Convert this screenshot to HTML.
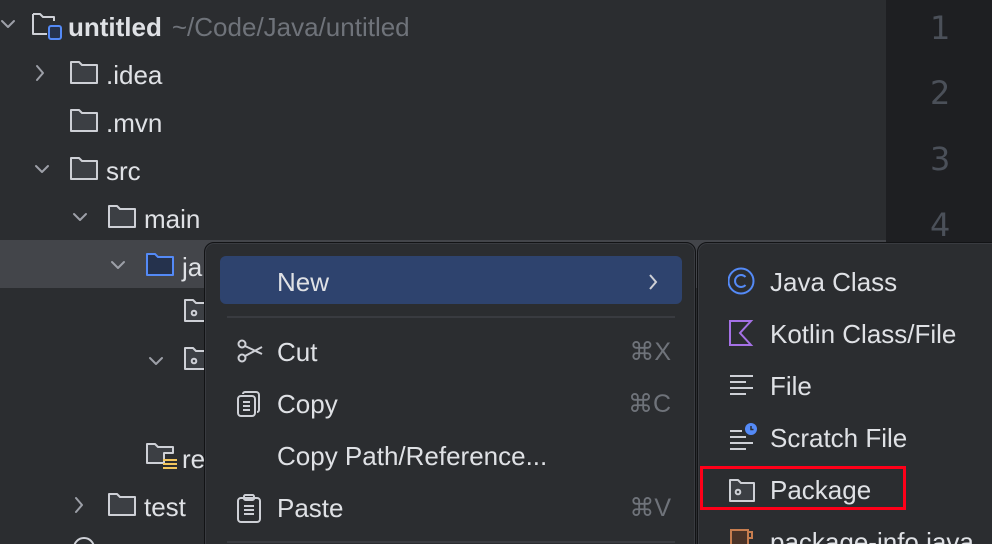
<!DOCTYPE html>
<html><head><meta charset="utf-8"><style>
html,body{margin:0;padding:0;overflow:hidden;width:992px;height:544px}
body{background:#2b2d30;position:relative;font-family:"Liberation Sans",sans-serif;color:#dfe1e5}
.ed{position:absolute;left:886px;top:0;width:106px;height:544px;background:#1e1f22}
.ln{position:absolute;left:930px;font-size:32px;color:#4b5059;font-family:"DejaVu Sans",sans-serif}
.sel{position:absolute;left:0;top:240px;width:886px;height:48px;background:#43454a}
.row{position:absolute;height:48px;display:flex;align-items:center;font-size:26px;white-space:nowrap;padding-top:3px}
.menu{position:absolute;background:#2b2d30;border:1px solid #121315;border-radius:10px;box-shadow:inset 0 0 0 1px #393b40;overflow:hidden}
.it{position:absolute;left:72px;font-size:26px;height:48px;line-height:50px;white-space:nowrap}
.sc{position:absolute;right:24px;font-size:25px;color:#6f737a;height:48px;line-height:50px}
.ic{position:absolute}
.sep{position:absolute;left:22px;right:20px;height:2px;background:#393b40}
</style></head><body>
<div class="ed"></div>
<div class="ln" style="top:9px">1</div>
<div class="ln" style="top:74px">2</div>
<div class="ln" style="top:140px">3</div>
<div class="ln" style="top:206px">4</div>
<div class="sel"></div>

<svg width="886" height="544" style="position:absolute;left:0;top:0" fill="none" stroke="#9da0a8" stroke-width="2" stroke-linecap="round" stroke-linejoin="round">
<path d="M2 21l6 6 6-6"/>
<path d="M37 66l6 7-6 7"/>
<path d="M36 166l6 6 6-6"/>
<path d="M74 214l6 6 6-6"/>
<path d="M112 262l6 6 6-6"/>
<path d="M150 358l6 6 6-6"/>
<path d="M76 498l6 7-6 7"/>
</svg>

<svg width="886" height="544" style="position:absolute;left:0;top:0" stroke-width="2" stroke-linejoin="round">
<g fill="#3c3f44" stroke="#ced0d6">
<path d="M33 14h7l3 3h11v4 M33 14v20h14" fill="none"/>
<path d="M71 62h8l3 3h15v18h-26z"/>
<path d="M71 110h8l3 3h15v18h-26z"/>
<path d="M71 158h8l3 3h15v18h-26z"/>
<path d="M109 206h8l3 3h15v18h-26z"/>
<path d="M185 300h8l3 3h10v18h-21z"/>
<path d="M185 348h8l3 3h10v18h-21z"/>
<path d="M147 444h8l3 3h15v6h-9v10h-17z"/>
<path d="M109 494h8l3 3h15v18h-26z"/>
</g>
<rect x="49" y="26" width="12" height="13" rx="2" fill="#25324d" stroke="#548af7"/>
<path d="M147 254h8l3 3h15v18h-26z" fill="#25324d" stroke="#548af7"/>
<circle cx="194" cy="313" r="2.3" fill="none" stroke="#ced0d6"/>
<circle cx="194" cy="361" r="2.3" fill="none" stroke="#ced0d6"/>
<g stroke="#f2c55c"><path d="M163 460h14M163 464h14M163 468h14"/></g>
<circle cx="84" cy="548" r="10" fill="none" stroke="#ced0d6"/>
</svg>

<div class="row" style="left:68px;top:0"><b style="font-weight:bold">untitled</b><span style="color:#6f737a;margin-left:10px">~/Code/Java/untitled</span></div>
<div class="row" style="left:106px;top:48px">.idea</div>
<div class="row" style="left:106px;top:96px">.mvn</div>
<div class="row" style="left:106px;top:144px">src</div>
<div class="row" style="left:144px;top:192px">main</div>
<div class="row" style="left:182px;top:240px">ja</div>
<div class="row" style="left:182px;top:432px">re</div>
<div class="row" style="left:144px;top:480px">test</div>

<div class="menu" style="left:204px;top:242px;width:490px;height:320px">
 <div style="position:absolute;left:15px;top:13px;width:462px;height:48px;background:#2e436e;border-radius:6px"></div>
 <div class="it" style="top:14px">New</div>
 <svg class="ic" style="left:442px;top:30px" width="12" height="18" fill="none" stroke="#ced0d6" stroke-width="2"><path d="M3 2l6 7-6 7"/></svg>
 <div class="sep" style="top:73px"></div>
 <div class="it" style="top:84px">Cut</div><div class="sc" style="top:84px">⌘X</div>
 <div class="it" style="top:136px">Copy</div><div class="sc" style="top:136px">⌘C</div>
 <div class="it" style="top:188px">Copy Path/Reference...</div>
 <div class="it" style="top:240px">Paste</div><div class="sc" style="top:240px">⌘V</div>
 <div class="sep" style="top:298px"></div>
 <svg class="ic" style="left:31px;top:96px" width="30" height="30" fill="none" stroke="#ced0d6" stroke-width="2"><circle cx="6" cy="5" r="3.5"/><circle cx="6" cy="19" r="3.5"/><path d="M9 7l17 8M9 17l17-9"/></svg>
 <svg class="ic" style="left:31px;top:147px" width="30" height="30" fill="none" stroke="#ced0d6" stroke-width="2"><rect x="2" y="6" width="17" height="20" rx="3"/><path d="M7 4a2 2 0 0 1 2-2h11a3 3 0 0 1 3 3v15a2 2 0 0 1-2 2M7 12h7M7 16h7M7 20h7"/></svg>
 <svg class="ic" style="left:31px;top:251px" width="30" height="30" fill="none" stroke="#ced0d6" stroke-width="2"><rect x="2" y="4" width="22" height="24" rx="3"/><rect x="8" y="1" width="10" height="5" rx="1.5"/><path d="M8 12h10M8 16h10M8 20h10"/></svg>
</div>

<div class="menu" style="left:697px;top:242px;width:320px;height:320px">
 <div class="it" style="top:14px">Java Class</div>
 <div class="it" style="top:66px">Kotlin Class/File</div>
 <div class="it" style="top:118px">File</div>
 <div class="it" style="top:170px">Scratch File</div>
 <div class="it" style="top:222px">Package</div>
 <div class="it" style="top:274px">package-info.java</div>
 <svg class="ic" style="left:30px;top:24px" width="30" height="30" fill="none" stroke="#548af7" stroke-width="2"><circle cx="13" cy="14" r="12.5"/><path d="M17.5 10a6 6 0 1 0 0 8"/></svg>
 <svg class="ic" style="left:30px;top:76px" width="30" height="30" fill="none" stroke="#a571e6" stroke-width="2"><path d="M2 2h21l-11 12 11 12H2z"/></svg>
 <svg class="ic" style="left:30px;top:130px" width="30" height="30" fill="none" stroke="#ced0d6" stroke-width="2"><path d="M2 3h23M2 9h16M2 15h23M2 21h16"/></svg>
 <svg class="ic" style="left:30px;top:180px" width="30" height="30" fill="none" stroke="#ced0d6" stroke-width="2"><path d="M2 8h12M2 14h16M2 20h23M2 26h16"/><circle cx="23" cy="6" r="6" fill="#548af7" stroke="none"/><path d="M23 3v3.5h2.5" stroke="#2b2d30" stroke-width="1.5"/></svg>
 <svg class="ic" style="left:30px;top:235px" width="30" height="30" fill="#3c3f44" stroke="#ced0d6" stroke-width="2" stroke-linejoin="round"><path d="M2 2h8l3 3h13v18H2z"/><circle cx="10" cy="14" r="2.3" fill="none"/></svg>
 <svg class="ic" style="left:30px;top:285px" width="30" height="30" fill="#4a3328" stroke="#c77d4f" stroke-width="2"><path d="M3 2h17v16a3 3 0 0 1-3 3H6a3 3 0 0 1-3-3z"/><path d="M20 4h4v6h-4" fill="none"/></svg>
</div>
<div style="position:absolute;left:700px;top:466px;width:200px;height:38px;border:3px solid #ff0019"></div>
</body></html>
